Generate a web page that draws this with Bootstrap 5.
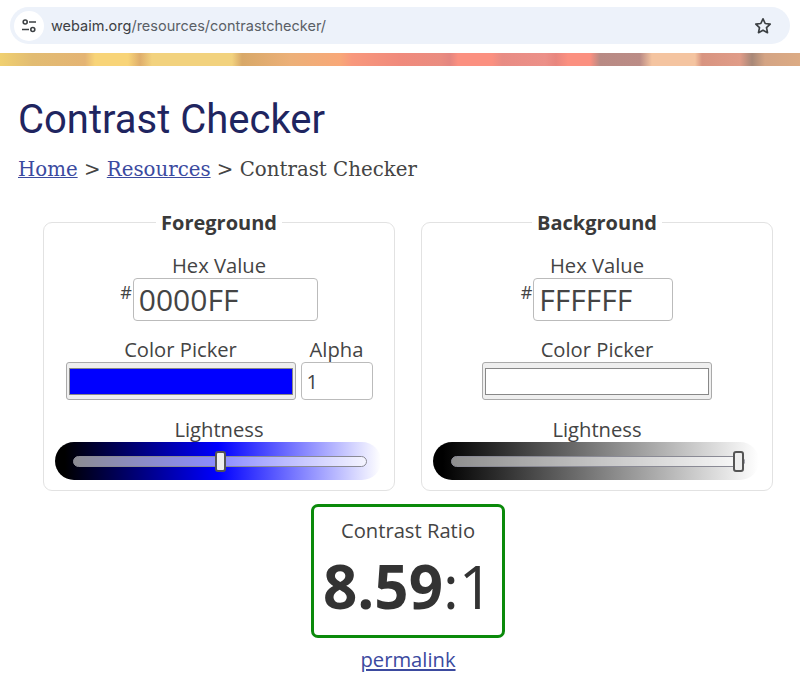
<!DOCTYPE html>
<html lang="en">
<head>
<meta charset="utf-8">
<title>Contrast Checker</title>
<link href="https://cdn.jsdelivr.net/npm/bootstrap@5.3.0/dist/css/bootstrap.min.css" rel="stylesheet">
<style>
html,body{height:693px;overflow:hidden;background:#fff}
body{font-family:"Open Sans",sans-serif;color:#444}
.chrome-wrap{padding:7px 10px 9px}
.addr{height:37px;background:#edf2fa;border-radius:19px;padding:0 18px 0 4px}
.site-btn{width:30px;height:30px;border-radius:50%;background:#fff}
.url{font-family:"Inter","Roboto",sans-serif;font-size:14.5px;color:#5a5f66;margin-left:7px}
.url b{font-weight:400;color:#3c4043}
.strip{height:13px;background:linear-gradient(90deg,#f0d070 0,#e2bc72 32px,#e4b474 85px,#f8d478 95px,#f8d478 128px,#dfae6c 140px,#f2d27e 152px,#f2d27e 232px,#d8a868 242px,#ecb078 290px,#f8a878 340px,#f8987c 352px,#f08a7c 400px,#ea8c80 440px,#e48680 450px,#fb9080 458px,#fb9080 492px,#e88c84 502px,#ec9088 545px,#e8867e 556px,#fb9080 568px,#fb9080 590px,#b88a84 600px,#bb8c86 640px,#f4c4a0 652px,#f4c4a0 695px,#d89480 702px,#e09c88 740px,#a88878 752px,#d4a484 765px,#dcab84 800px)}
.page-main{padding:0 27px 0 18px}
.title{font-family:Roboto,sans-serif;font-weight:400;font-size:40px;line-height:46px;color:#1f2560;margin:31px 0 0}
.crumbs{font-family:"DejaVu Serif",serif;font-size:19.8px;line-height:28px;color:#444;margin:13px 0 0}
.crumbs a,.perma{color:#3b4a9f}
.panels{gap:26px;margin:26px 0 0 25px}
.panel{flex:0 0 352px;height:280.500px;border:1px solid #e2e2e2;border-radius:9px;margin:0;padding:0 11px;min-width:0}
.panel legend{float:none;width:auto;margin:0 auto;padding:2px 5px 0;font-size:20px;line-height:22px;font-weight:700;color:#3a3a3a}
.fld{font-size:20.2px;line-height:26px;color:#444}
.lbl-hex{margin-top:18px}
.lbl-light{margin-top:16px}
.pick-row{margin-top:15px;gap:5px}
.hash{font-size:18px;line-height:20px;margin-right:1px;align-self:flex-start;margin-top:4px}
.hex{height:43px;border:1px solid #bbb;border-radius:4px;font-family:"Open Sans",sans-serif;font-size:30px;line-height:40px;color:#444;padding:0 5px;background:#fff;outline:0}
.hex-a{width:185px}.hex-b{width:140px}
.alpha{width:72px;height:38px;border:1px solid #bbb;border-radius:4px;font-size:20px;color:#444;padding:0 5px;background:#fff;outline:0;display:block}
.swatch{width:230px;height:38px;padding:0;border:1px solid #aaa;border-radius:3px;background:#efefef;display:block}
.swatch::-webkit-color-swatch-wrapper{padding:5px 2px 4px}
.swatch::-webkit-color-swatch{border:1px solid #888;border-radius:0}
.slider{-webkit-appearance:none;appearance:none;display:block;width:326px;height:38px;border-radius:19px;margin:0;padding:0 14px 0 18px;outline:0}
.sl-a{background:linear-gradient(90deg,#000 3%,#00f 50%,#fff 100%)}
.sl-b{background:linear-gradient(90deg,#000 3%,#fff 100%)}
.slider::-webkit-slider-runnable-track{height:11px;border:1px solid #8a8a95;border-radius:6px;background:rgba(255,255,255,.55)}
.slider::-webkit-slider-thumb{-webkit-appearance:none;width:11px;height:21px;margin-top:-6px;border:2px solid #555;border-radius:3px;background:#eee}
.ratio-box{width:194px;height:134px;border:3px solid #0b8a0b;border-radius:7px;margin:13px 0 0 293px}
.ratio-label{font-size:20.2px;line-height:26px;color:#444;margin-top:10px}
.ratio-num{font-size:60px;line-height:72px;color:#333;margin-top:7px}
.perma-wrap{margin:8px 0 0 293px;width:194px;font-size:20.2px;line-height:26px}
</style>
</head>
<body>
<div class="chrome-wrap">
  <div class="addr d-flex align-items-center">
    <span class="site-btn d-flex align-items-center justify-content-center">
      <svg width="16" height="16" viewBox="0 0 16 16" fill="none" stroke="#3c4043" stroke-width="1.6"><circle cx="4.2" cy="4" r="2"/><path d="M8 4h7M1 11.5h7"/><circle cx="11.8" cy="11.5" r="2"/></svg>
    </span>
    <span class="url flex-grow-1"><b>webaim.org</b>/resources/contrastchecker/</span>
    <svg width="18" height="18" viewBox="0 0 18 18" fill="none" stroke="#3c4043" stroke-width="1.7" stroke-linejoin="round"><path d="M9 1.8l2.2 4.7 5 .6-3.7 3.5 1 5.1L9 13.2l-4.5 2.5 1-5.1L1.800 7.100l5-.6z"/></svg>
  </div>
</div>
<div class="strip"></div>
<main class="page-main">
  <h1 class="title">Contrast Checker</h1>
  <p class="crumbs"><a href="#">Home</a> &gt; <a href="#">Resources</a> &gt; Contrast Checker</p>
  <div class="panels d-flex">
    <fieldset class="panel">
      <legend>Foreground</legend>
      <div class="fld lbl-hex text-center">Hex Value</div>
      <div class="d-flex justify-content-center"><span class="hash">#</span><input class="hex hex-a" value="0000FF" aria-label="Foreground hex"></div>
      <div class="d-flex justify-content-center pick-row">
        <div class="text-center"><div class="fld">Color Picker</div><input class="swatch" type="color" value="#0000ff" aria-label="Foreground colour"></div>
        <div class="text-center"><div class="fld">Alpha</div><input class="alpha" value="1" aria-label="Alpha"></div>
      </div>
      <div class="fld lbl-light text-center">Lightness</div>
      <input class="slider sl-a" type="range" min="0" max="100" value="50" aria-label="Foreground lightness">
    </fieldset>
    <fieldset class="panel">
      <legend>Background</legend>
      <div class="fld lbl-hex text-center">Hex Value</div>
      <div class="d-flex justify-content-center"><span class="hash">#</span><input class="hex hex-b" value="FFFFFF" aria-label="Background hex"></div>
      <div class="d-flex justify-content-center pick-row">
        <div class="text-center"><div class="fld">Color Picker</div><input class="swatch" type="color" value="#ffffff" aria-label="Background colour"></div>
      </div>
      <div class="fld lbl-light text-center">Lightness</div>
      <input class="slider sl-b" type="range" min="0" max="100" value="100" aria-label="Background lightness">
    </fieldset>
  </div>
  <div class="ratio-box text-center">
    <div class="ratio-label">Contrast Ratio</div>
    <div class="ratio-num"><strong>8.59</strong>:1</div>
  </div>
  <div class="perma-wrap text-center"><a class="perma" href="#">permalink</a></div>
</main>
<script src="https://cdn.jsdelivr.net/npm/bootstrap@5.3.0/dist/js/bootstrap.bundle.min.js"></script>
</body>
</html>
